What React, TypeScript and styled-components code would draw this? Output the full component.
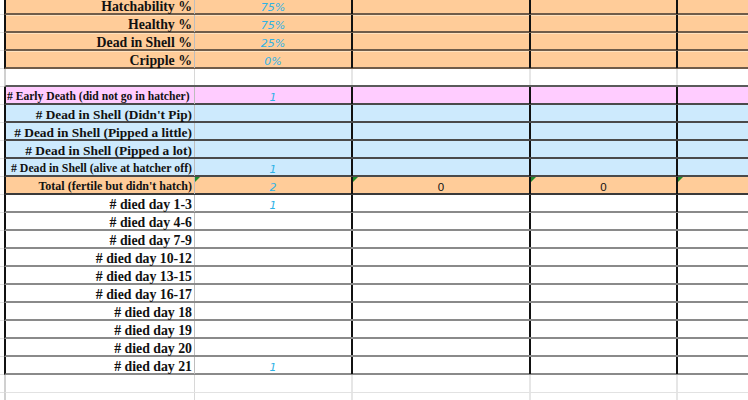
import React from 'react';
import styled, { createGlobalStyle, css } from 'styled-components';

type Kind = 'orange' | 'blank' | 'pink' | 'blue' | 'total' | 'white' | 'grid';

type RowData = {
    kind: Kind;
    label?: string;
    size?: number;
    align?: 'left' | 'right';
    value?: string;
    zeros?: boolean;
};

const rows: RowData[] = [
    { kind: 'orange', label: 'Hatchability %', value: '75%' },
    { kind: 'orange', label: 'Healthy %', value: '75%' },
    { kind: 'orange', label: 'Dead in Shell %', value: '25%' },
    { kind: 'orange', label: 'Cripple %', value: '0%' },
    { kind: 'blank' },
    { kind: 'pink', label: '# Early Death (did not go in hatcher)', size: 11.6, align: 'left', value: '1' },
    { kind: 'blue', label: "# Dead in Shell (Didn't Pip)", size: 13.3 },
    { kind: 'blue', label: '# Dead in Shell (Pipped a little)', size: 13.4 },
    { kind: 'blue', label: '# Dead in Shell (Pipped a lot)', size: 13.4 },
    { kind: 'blue', label: '# Dead in Shell (alive at hatcher off)', size: 11.8, value: '1' },
    { kind: 'total', label: "Total (fertile but didn't hatch)", size: 12, value: '2', zeros: true },
    { kind: 'white', label: '# died day 1-3', value: '1' },
    { kind: 'white', label: '# died day 4-6' },
    { kind: 'white', label: '# died day 7-9' },
    { kind: 'white', label: '# died day 10-12' },
    { kind: 'white', label: '# died day 13-15' },
    { kind: 'white', label: '# died day 16-17' },
    { kind: 'white', label: '# died day 18' },
    { kind: 'white', label: '# died day 19' },
    { kind: 'white', label: '# died day 20' },
    { kind: 'white', label: '# died day 21', value: '1' },
    { kind: 'grid' },
    { kind: 'grid' },
];

const fills: Record<Kind, string> = {
    orange: '#ffcc99',
    blank: '#ffffff',
    pink: '#ffccff',
    blue: '#cdeafd',
    total: '#ffcc99',
    white: '#ffffff',
    grid: '#ffffff',
};

const lines: Record<Kind, string> = {
    orange: '#6f5c4a',
    blank: '#5a5a5a',
    pink: '#4a4a4a',
    blue: '#4a4a4a',
    total: '#3a3a3a',
    white: '#8a8a8a',
    grid: '#e2e2e2',
};

const GlobalStyle = createGlobalStyle`
    html, body {
        margin: 0;
        padding: 0;
        background: #ffffff;
        overflow: hidden;
    }
`;

const Sheet = styled.div`
    display: flex;
    flex-direction: column;
    width: 748px;
    margin-top: -3px;
`;

const Row = styled.div`
    display: flex;
    height: 18px;
`;

const Gutter = styled.div`
    width: 4px;
    box-sizing: border-box;
    border-bottom: 1px solid #e2e2e2;
`;

const Band = styled.div<{ $kind: Kind }>`
    flex: 1;
    display: grid;
    grid-template-columns: 189px 158px 178px 147px 1fr;
    box-sizing: border-box;
    background: ${p => fills[p.$kind]};
    border-left: 2px solid ${p => (p.$kind === 'blank' || p.$kind === 'grid' ? '#d0d0d0' : '#111111')};
    border-bottom: ${p => (p.$kind === 'grid' ? '1px' : '2px')} solid ${p => lines[p.$kind]};
    ${p => p.$kind === 'orange' && css`box-shadow: inset 0 1px 0 #ffe2bf;`}
`;

const Label = styled.div<{ $size: number; $align: 'left' | 'right'; $grid: boolean }>`
    position: relative;
    z-index: 1;
    display: flex;
    align-items: flex-start;
    justify-content: ${p => (p.$align === 'left' ? 'flex-start' : 'flex-end')};
    padding: 3px 2px 0 1px;
    border-right: 1px solid ${p => (p.$grid ? '#d8d8d8' : '#bdbdbd')};
    font-family: "Liberation Serif", "DejaVu Serif", serif;
    font-weight: bold;
    font-size: ${p => p.$size}px;
    line-height: 13px;
    color: #111111;
    white-space: nowrap;
`;

const Cell = styled.div<{ $edge: boolean; $mark: boolean }>`
    position: relative;
    display: flex;
    align-items: flex-start;
    justify-content: center;
    padding-top: 4px;
    border-right: 2px solid ${p => (p.$edge ? '#111111' : '#e6e6e6')};
    line-height: 13px;
    white-space: nowrap;

    ${p => p.$mark && css`
        &::before {
            content: '';
            position: absolute;
            left: 0;
            top: 0;
            border-top: 5px solid #1f8a2a;
            border-right: 5px solid transparent;
        }
    `}
`;

const LastCell = styled.div<{ $mark: boolean }>`
    position: relative;

    ${p => p.$mark && css`
        &::before {
            content: '';
            position: absolute;
            left: 0;
            top: 0;
            border-top: 5px solid #1f8a2a;
            border-right: 5px solid transparent;
        }
    `}
`;

const Input = styled.span`
    font-family: "DejaVu Sans", Verdana, sans-serif;
    font-style: italic;
    font-size: 11px;
    color: #2fb2e6;
`;

const Calc = styled.span`
    font-family: "Liberation Sans", Arial, sans-serif;
    font-size: 11.5px;
    color: #111111;
`;

const App = () => {
    return (
        <>
            <GlobalStyle />
            <Sheet>
                {rows.map((r, i) => {
                    const inside = r.kind !== 'blank' && r.kind !== 'grid';
                    const total = r.kind === 'total';
                    return (
                        <Row key={i}>
                            <Gutter />
                            <Band $kind={r.kind}>
                                <Label $size={r.size ?? 13.8} $align={r.align ?? 'right'} $grid={!inside}>
                                    {r.label}
                                </Label>
                                <Cell $edge={inside} $mark={total}>
                                    {r.value && <Input>{r.value}</Input>}
                                </Cell>
                                <Cell $edge={inside} $mark={total}>
                                    {r.zeros && <Calc>0</Calc>}
                                </Cell>
                                <Cell $edge={inside} $mark={total}>
                                    {r.zeros && <Calc>0</Calc>}
                                </Cell>
                                <LastCell $mark={total} />
                            </Band>
                        </Row>
                    );
                })}
            </Sheet>
        </>
    );
};

export default App;
